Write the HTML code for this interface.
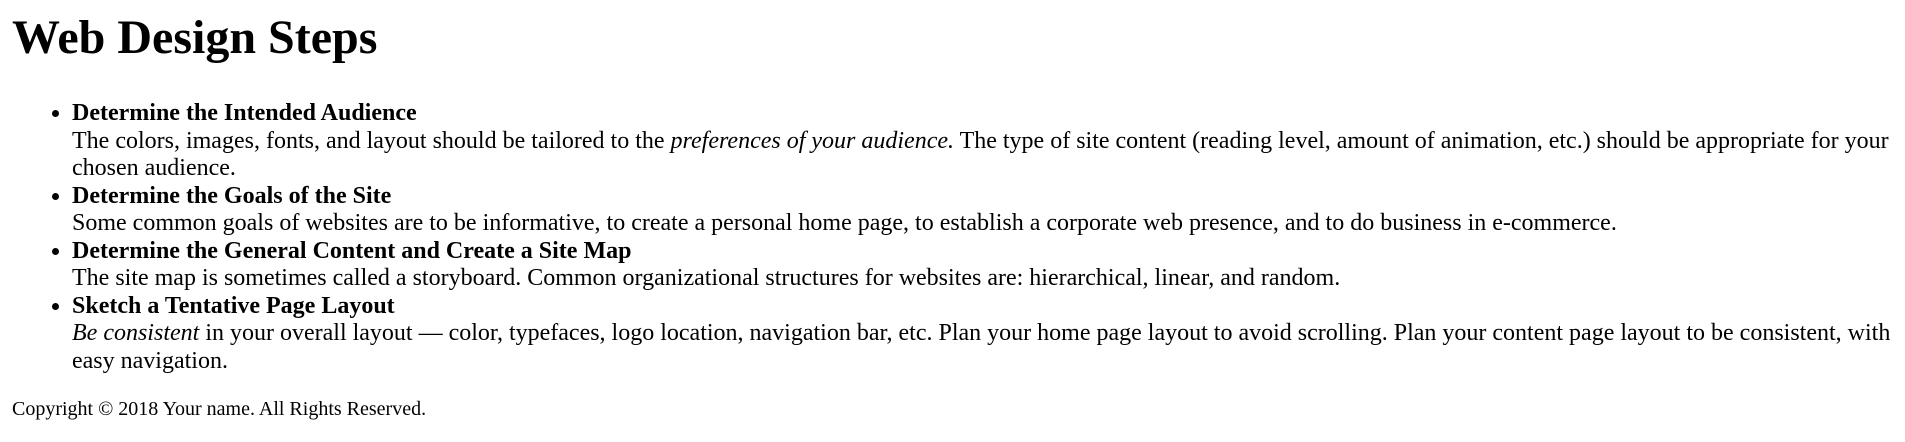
<!DOCTYPE html>
<html><head><meta charset="utf-8"><style>
body{margin:0;padding:0 8px 0 12px;font-family:"Liberation Serif","Times New Roman",serif;color:#000;background:#fff;}
h1{font-size:48px;margin:0;position:absolute;top:10px;left:12px;line-height:55px;}
ul{position:absolute;top:100px;left:12px;right:8px;margin:0;padding-left:60px;font-family:"Liberation Serif","Times New Roman",serif;font-size:24px;line-height:27.5px;}
footer{position:absolute;top:398px;left:12px;font-family:"Liberation Serif","Times New Roman",serif;font-size:20px;line-height:22px;}
</style></head><body>
<h1>Web Design Steps</h1>
<ul>
<li><strong>Determine the Intended Audience</strong><br>The colors, images, fonts, and layout should be tailored to the <em>preferences of your audience.</em> The type of site content (reading level, amount of animation, etc.) should be appropriate for your chosen audience.</li>
<li><strong>Determine the Goals of the Site</strong><br>Some common goals of websites are to be informative, to create a personal home page, to establish a corporate web presence, and to do business in e-commerce.</li>
<li><strong>Determine the General Content and Create a Site Map</strong><br>The site map is sometimes called a storyboard. Common organizational structures for websites are: hierarchical, linear, and random.</li>
<li><strong>Sketch a Tentative Page Layout</strong><br><em>Be consistent</em> in your overall layout — color, typefaces, logo location, navigation bar, etc. Plan your home page layout to avoid scrolling. Plan your content page layout to be consistent, with easy navigation.</li>
</ul>
<footer>Copyright © 2018 Your name. All Rights Reserved.</footer>
</body></html>
